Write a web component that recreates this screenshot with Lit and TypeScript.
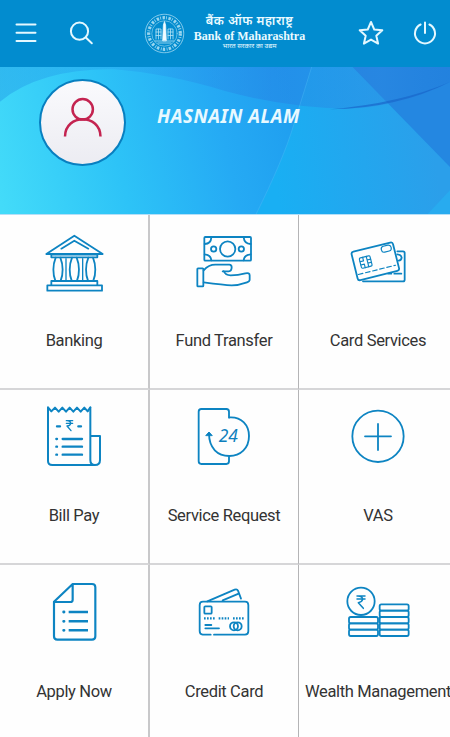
import { LitElement, html, css, svg } from "lit";
import { customElement } from "lit/decorators.js";

const range = (n: number) => Array.from({ length: n }, (_, i) => i);

const bank = svg`
  <path d="M139 117 L223 62 L308 117 Z M184 101 L223 77 L265 101"/>
  <path d="M154 119 H292 V127 H154 Z M154 209 V198 H292 V209 M142 211 H306 V227 H142 Z"/>
  ${[174, 223, 272].map(
    (x) => svg`<path d="M${x - 7} 128 C${x - 16} 150 ${x - 16} 178 ${x - 8} 197 M${x + 7} 128 C${x + 16} 150 ${x + 16} 178 ${x + 8} 197"/>`
  )}
  <path stroke-width="4" d="M198 131 V196 M248 131 V196"/>`;

const transfer = svg`
  <rect x="613" y="66" width="140" height="71" rx="3"/>
  <circle cx="683" cy="102" r="23"/><circle cx="641" cy="102" r="8"/><circle cx="724" cy="102" r="8"/>
  <path d="M634 67 Q633 86 614 87 M614 118 Q632 119 634 136 M731 67 Q733 86 752 87 M752 118 Q733 119 731 136"/>
  <rect x="592" y="160" width="18" height="54" rx="2"/>
  <path d="M611 166 Q626 149 646 149 H688 Q695 149 695 157 Q695 169 686 169 H668 M671 168 Q676 181 692 181 Q714 181 736 175 Q749 172 749 181 V194 Q749 199 741 202 Q716 211 695 211 Q672 210 611 202"/>`;

const cards = svg`
  <path d="M517 109 H534 Q539 109 539 114 V194 Q539 199 534 199 H414"/>
  <path d="M517 118 Q529 119 530 128 Q529 136 521 137 M490 176 H499 M508 176 H529"/>
  <g transform="rotate(-14 451 139)">
    <rect x="387" y="95" width="128" height="88" rx="7"/>
    <rect x="477" y="101" width="30" height="18" rx="8" stroke-width="3.5"/>
    <rect x="406" y="118" width="33" height="32" rx="4" stroke-width="3.5"/>
    <path stroke-width="3.5" d="M406 129 H417 V118 M406 139 H417 V150 M428 118 V129 H439 M439 139 H428 V150 M428 129 V139"/>
    <path stroke-width="3.5" stroke-dasharray="14 8" d="M392 165 H507"/>
  </g>`;

const bill = svg`
  <path stroke-width="6" d="M144 68 V228 Q144 240 157 240 H285 Q300 240 300 225 V153 H271 M271 68 V225 Q271 240 285 240"/>
  <path stroke-width="6" d="M144 67 L154 79 L165 68 L176 80 L187 68 L198 80 L209 68 L220 80 L231 68 L242 80 L253 68 L263 79 L271 67"/>
  <path stroke-width="7" d="M171 124 H180 M235 124 H243 M188 162 H246 M188 185 H246 M188 209 H246 M169 162 H171 M169 185 H171 M169 209 H171"/>
  <path stroke-width="4" d="M199 107 H218 M199 115 H218 M201 107 Q212 108 212 115 Q211 122 201 123 L213 137"/>`;

const service = svg`
  <path stroke-width="5.5" d="M687 98 V80 Q687 72 679 72 H604 Q596 72 596 80 V229 Q596 237 604 237 H679 Q687 237 687 229 V216"/>
  <path stroke-width="5.5" d="M689 97 C725 95 747 121 747 153 C747 190 721 213 688 213 C653 213 627 190 627 145"/>
  <path fill="#0d7fbd" stroke-width="3" d="M618 151 L627 141 L636 151 Z"/>
  <text class="digits" x="656" y="171">24</text>`;

const plus = svg`
  <circle cx="459" cy="154" r="77"/>
  <path d="M459 117 V195 M420 154 H498"/>`;

const form = svg`
  <path stroke-width="6.5" d="M218 72 H276 Q286 72 286 82 V229 Q286 239 276 239 H172 Q162 239 162 229 V125 Z M218 72 V119 Q218 126 211 126 H163"/>
  <path stroke-width="7.5" stroke-linecap="butt" d="M206 156 H264 M206 184 H264 M206 211 H264"/>
  <path stroke-width="8.5" d="M191 156 H192 M191 184 H192 M191 211 H192"/>`;

const credit = svg`
  <path d="M632 224 H608 Q599 223 599 213 V135 Q599 125 609 125 H735 Q745 125 745 135 V214 Q745 224 735 224 H642"/>
  <path d="M622 124 L704 89 Q711 86 714 92 L723 116 M668 121 L716 101"/>
  <rect x="613" y="139" width="22" height="22" rx="3"/>
  <path stroke-dasharray="5 4" stroke-linecap="butt" stroke-width="7" d="M612 175 H645 M656 175 H687 M699 175 H734"/>
  <path d="M616 195 H634 M616 205 H657"/>
  <circle cx="702" cy="199" r="12"/><circle cx="713" cy="199" r="12"/>`;

const wealth = svg`
  <circle cx="408" cy="124" r="41"/>
  <path stroke-width="4.5" d="M396 108 H420 M396 117 H420 M399 108 Q413 109 413 118 Q411 126 400 128 L415 145"/>
  ${range(3).map((i) => svg`<rect x="372" y="${171 + i * 19}" width="87" height="19" rx="5"/>`)}
  ${range(5).map((i) => svg`<rect x="464" y="${133 + i * 19}" width="87" height="19" rx="5"/>`)}`;

const tiles = [
  { label: "Banking", art: bank, box: "96 30 252 216" },
  { label: "Fund Transfer", art: transfer, box: "546 30 252 216" },
  { label: "Card Services", art: cards, box: "333 30 252 216" },
  { label: "Bill Pay", art: bill, box: "96 45 252 216" },
  { label: "Service Request", art: service, box: "546 45 252 216" },
  { label: "VAS", art: plus, box: "333 45 252 216" },
  { label: "Apply Now", art: form, box: "96 45 252 216" },
  { label: "Credit Card", art: credit, box: "546 45 252 216" },
  { label: "Wealth Management", art: wealth, box: "333 45 252 216" },
];

@customElement("service-tile")
class ServiceTile extends LitElement {
  static properties = { tile: { attribute: false } };
  declare tile: (typeof tiles)[number];

  static styles = css`
    :host {
      display: flex;
      flex-direction: column;
      align-items: center;
      box-sizing: border-box;
      padding-top: 10px;
      min-width: 0;
    }
    .icon {
      width: 84px;
      height: 72px;
      flex: none;
      fill: none;
      stroke: #0d84c2;
      stroke-width: 5.4;
      stroke-linecap: round;
      stroke-linejoin: round;
    }
    .label {
      margin-top: var(--label-gap, 33.5px);
      font: 16.5px/20px Roboto, sans-serif;
      letter-spacing: -0.34px;
      color: #333;
      white-space: nowrap;
    }
    .digits {
      font: italic 52px "Noto Sans", sans-serif;
      fill: #0d7fbd;
      stroke: none;
    }
  `;

  render() {
    return html`<svg class="icon" viewBox=${this.tile.box}>${this.tile.art}</svg>
      <div class="label">${this.tile.label}</div>`;
  }
}

@customElement("app-root")
class AppRoot extends LitElement {
  static styles = css`
    :host {
      display: flex;
      flex-direction: column;
      width: 450px;
      height: 737px;
      overflow: hidden;
      background: #fefefe;
    }
    .bar {
      height: 67px;
      flex: none;
      box-sizing: border-box;
      display: flex;
      align-items: center;
      padding: 0 12px 1px 14px;
      background: #028ccf;
    }
    .glyph {
      flex: none;
      fill: none;
      stroke: #e4f8ff;
      stroke-width: 2;
      stroke-linecap: round;
      stroke-linejoin: round;
    }
    .search {
      margin-left: 31px;
    }
    .brand {
      display: flex;
      align-items: center;
      gap: 9px;
      margin: 0 auto 0 48.5px;
    }
    .names {
      display: flex;
      flex-direction: column;
      align-items: center;
      width: 112px;
      color: #e9faff;
      white-space: nowrap;
      font-family: "Noto Sans Devanagari", "Noto Sans", sans-serif;
    }
    .hindi {
      font-size: 12.5px;
      font-weight: 600;
      line-height: 14px;
      letter-spacing: 0.5px;
    }
    .english {
      margin-top: 1px;
      font: bold 12px/12px "Liberation Serif", serif;
    }
    .tagline {
      font-size: 6.7px;
      line-height: 9px;
    }
    .star {
      margin-right: 28px;
    }
    .hero {
      position: relative;
      height: 148px;
      flex: none;
      box-sizing: border-box;
      display: flex;
      align-items: flex-start;
      padding: 12px 0 0 39px;
      border-bottom: 1px solid #b5dff7;
      overflow: hidden;
    }
    .backdrop {
      position: absolute;
      inset: 0;
      width: 450px;
      height: 148px;
    }
    .avatar {
      position: relative;
      box-sizing: border-box;
      width: 87px;
      height: 87px;
      border: 2px solid #087fc0;
      border-radius: 50%;
      background: linear-gradient(#fafafd, #ececf2);
    }
    .person {
      display: block;
      fill: none;
      stroke: #c42350;
      stroke-width: 2.5;
    }
    .user {
      position: relative;
      margin: 25px 0 0 31px;
      font: italic 700 18.8px/24px "Noto Sans", sans-serif;
      letter-spacing: 0.5px;
      color: #e8f9ff;
      white-space: nowrap;
    }
    .grid {
      display: grid;
      width: 457px;
      grid-template-columns: 150px 149px 158px;
      grid-template-rows: 175px 175px 173px;
    }
    .cell {
      border-right: 2px solid #c8c8ca;
      border-bottom: 2px solid #d6d6d8;
    }
    .cell:nth-child(3n + 2) {
      border-right: 1px solid #b4b4b6;
    }
    .cell:nth-child(3n) {
      border-right: 0;
    }
    .cell:nth-child(n + 7) {
      border-bottom: 0;
      --label-gap: 34.5px;
    }
  `;

  render() {
    return html`
      <header class="bar">
        <svg class="glyph" width="24" height="24" viewBox="14 21 24 24">
          <path d="M16.5 24.5 H35.5 M16.5 32.7 H35.5 M16.5 41 H35.5" />
        </svg>
        <svg class="glyph search" width="26" height="26" viewBox="69 20 26 26">
          <circle cx="79.5" cy="31.2" r="8.6" /><path d="M85.8 37.6 L91.8 43.2" />
        </svg>
        <div class="brand">
          <svg class="glyph" width="41" height="41" viewBox="0 0 41 41">
            <g stroke-width="0.8">
              <circle cx="20.5" cy="20.5" r="19.2" stroke="#a8dcf2" stroke-dasharray="2 0.7" />
              <circle cx="20.5" cy="20.5" r="15.8" stroke="#9ad6ef" stroke-width="3.2" stroke-dasharray="2.4 1.2 0.8 1.6" stroke-linecap="butt" />
              <circle cx="20.5" cy="20.5" r="12.7" stroke="#79c8e9" />
              <path d="M12 26 V16 H17 V26 M24 26 V16 H29 V26 M12 19 H17 M12 22.5 H17 M24 19 H29 M24 22.5 H29 M14.5 16 V26 M26.5 16 V26 M11 28 H30 M14 30 H27" stroke="#b4e3f5" />
              <path d="M18.7 27.5 L19.4 12 L20.5 8.5 L21.6 12 L22.3 27.5 Z" fill="#f2fcff" />
            </g>
          </svg>
          <div class="names">
            <div class="hindi">बैंक ऑफ महाराष्ट्र</div>
            <div class="english">Bank of Maharashtra</div>
            <div class="tagline">भारत सरकार का उद्यम</div>
          </div>
        </div>
        <svg class="glyph star" width="26" height="26" viewBox="358 20 26 26">
          <path d="M371 22 L374.3 29.6 L382.3 30.3 L376.3 35.8 L378.1 43.6 L371 39.6 L363.9 43.6 L365.7 35.8 L359.7 30.3 L367.7 29.6 Z" />
        </svg>
        <svg class="glyph" width="26" height="26" viewBox="412 20 26 26">
          <path d="M420.6 24.5 A10 10 0 1 0 429.4 24.5 M425 22.5 V33" />
        </svg>
      </header>
      <section class="hero">
        <svg class="backdrop" viewBox="0 3 1350 444" preserveAspectRatio="none">
          <defs>
            <linearGradient id="sky" gradientUnits="userSpaceOnUse" x1="0" y1="400" x2="900" y2="180">
              <stop offset="0" stop-color="#43dbf9" />
              <stop offset="0.4" stop-color="#2dc3f7" />
              <stop offset="0.75" stop-color="#25aaf4" />
              <stop offset="1" stop-color="#1f9eef" />
            </linearGradient>
            <linearGradient id="beam" gradientUnits="userSpaceOnUse" x1="820" y1="300" x2="1300" y2="230">
              <stop offset="0" stop-color="#19aff3" />
              <stop offset="1" stop-color="#2b9fea" />
            </linearGradient>
            <linearGradient id="deep" gradientUnits="userSpaceOnUse" x1="0" y1="0" x2="1350" y2="0">
              <stop offset="0" stop-color="#1b8de2" stop-opacity="0.38" />
              <stop offset="0.25" stop-color="#2395ea" stop-opacity="0.28" />
              <stop offset="0.6" stop-color="#2878e0" stop-opacity="0.38" />
              <stop offset="0.85" stop-color="#2d86e2" stop-opacity="0.35" />
              <stop offset="1" stop-color="#1f72d6" stop-opacity="0.25" />
            </linearGradient>
          </defs>
          <rect y="0" width="1350" height="450" fill="url(#sky)" />
          <path d="M935 0 H1055 L1350 303 V450 H767 Q850 280 880 180 Z" fill="url(#beam)" />
          <path d="M1055 0 H1350 V303 Z" fill="#2487e1" />
          <path d="M1280 447 L1350 373 V447 Z" fill="#28abef" />
          <path d="M0 0 H1350 V48 Q1200 125 1040 128 Q860 125 675 75 Q500 22 340 10 Q120 8 0 107 Z" fill="url(#deep)" />
          <path d="M990 130 Q1190 128 1350 48 Q1200 112 990 130" fill="#1867ca" opacity="0.7" />
          <path d="M767 447 Q850 280 880 180 L935 3" fill="none" stroke="#63c8fa" stroke-width="2" opacity="0.4" />
        </svg>
        <div class="avatar">
          <svg class="person" width="83" height="83" viewBox="41 81 83 83">
            <circle cx="82.7" cy="109.3" r="10.2" />
            <path d="M65 136.5 C65.5 113.5 100 113.5 100.5 136.5" />
          </svg>
        </div>
        <div class="user">HASNAIN ALAM</div>
      </section>
      <main class="grid">
        ${tiles.map((tile) => html`<service-tile class="cell" .tile=${tile}></service-tile>`)}
      </main>
    `;
  }
}
